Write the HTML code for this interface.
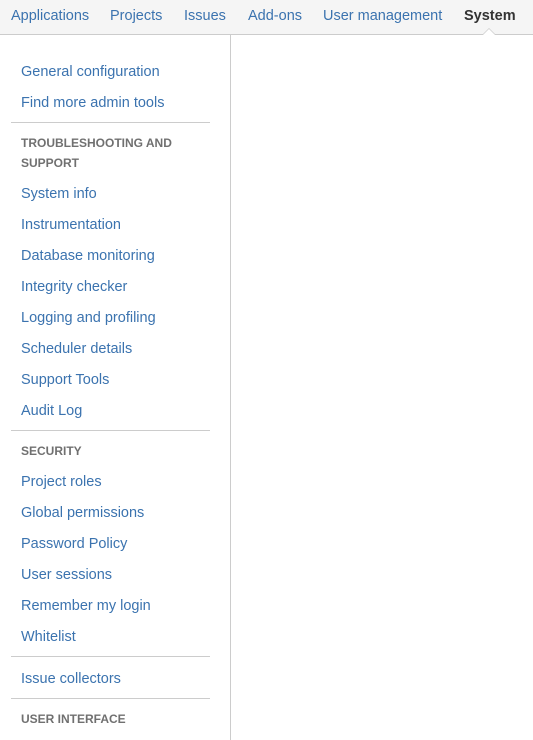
<!DOCTYPE html>
<html><head><style>
body{margin:0;width:533px;height:740px;overflow:hidden;background:#fff;font-family:"Liberation Sans",Arial,sans-serif;position:relative}
.nav{position:absolute;left:0;top:0;width:533px;height:34px;background:#f5f5f5;border-bottom:1px solid #ccc}
.nav span{position:absolute;top:8px;font-size:14.5px;color:#3b73af}
.nav b{position:absolute;top:8px;font-size:14.5px;color:#333}
.caret{position:absolute;left:482px;top:28px;width:0;height:0;border-left:7px solid transparent;border-right:7px solid transparent;border-bottom:7px solid #ccc}
.caret2{position:absolute;left:483px;top:29px;width:0;height:0;border-left:6px solid transparent;border-right:6px solid transparent;border-bottom:6px solid #fff}
.vl{position:absolute;left:230px;top:35px;width:1px;height:705px;background:#ccc}
.a{position:absolute;left:21px;font-size:14.5px;color:#3b73af;line-height:16px}
.h{position:absolute;left:21px;font-size:12px;font-weight:bold;color:#707070;line-height:20px}
.hr{position:absolute;left:11px;width:199px;height:1px;background:#ccc}
</style></head><body>
<div class="nav">
<span style="left:11px">Applications</span>
<span style="left:110px">Projects</span>
<span style="left:184px">Issues</span>
<span style="left:248px">Add-ons</span>
<span style="left:323px">User management</span>
<b style="left:464px">System</b>
</div>
<div class="caret"></div><div class="caret2"></div>
<div class="vl"></div>
<div class="a" style="top:64px">General configuration</div>
<div class="a" style="top:95px">Find more admin tools</div>
<div class="hr" style="top:122px"></div>
<div class="h" style="top:133px">TROUBLESHOOTING AND<br>SUPPORT</div>
<div class="a" style="top:186px">System info</div>
<div class="a" style="top:217px">Instrumentation</div>
<div class="a" style="top:248px">Database monitoring</div>
<div class="a" style="top:279px">Integrity checker</div>
<div class="a" style="top:310px">Logging and profiling</div>
<div class="a" style="top:341px">Scheduler details</div>
<div class="a" style="top:372px">Support Tools</div>
<div class="a" style="top:403px">Audit Log</div>
<div class="hr" style="top:430px"></div>
<div class="h" style="top:441px">SECURITY</div>
<div class="a" style="top:474px">Project roles</div>
<div class="a" style="top:505px">Global permissions</div>
<div class="a" style="top:536px">Password Policy</div>
<div class="a" style="top:567px">User sessions</div>
<div class="a" style="top:598px">Remember my login</div>
<div class="a" style="top:629px">Whitelist</div>
<div class="hr" style="top:656px"></div>
<div class="a" style="top:671px">Issue collectors</div>
<div class="hr" style="top:698px"></div>
<div class="h" style="top:709px">USER INTERFACE</div>
</body></html>
